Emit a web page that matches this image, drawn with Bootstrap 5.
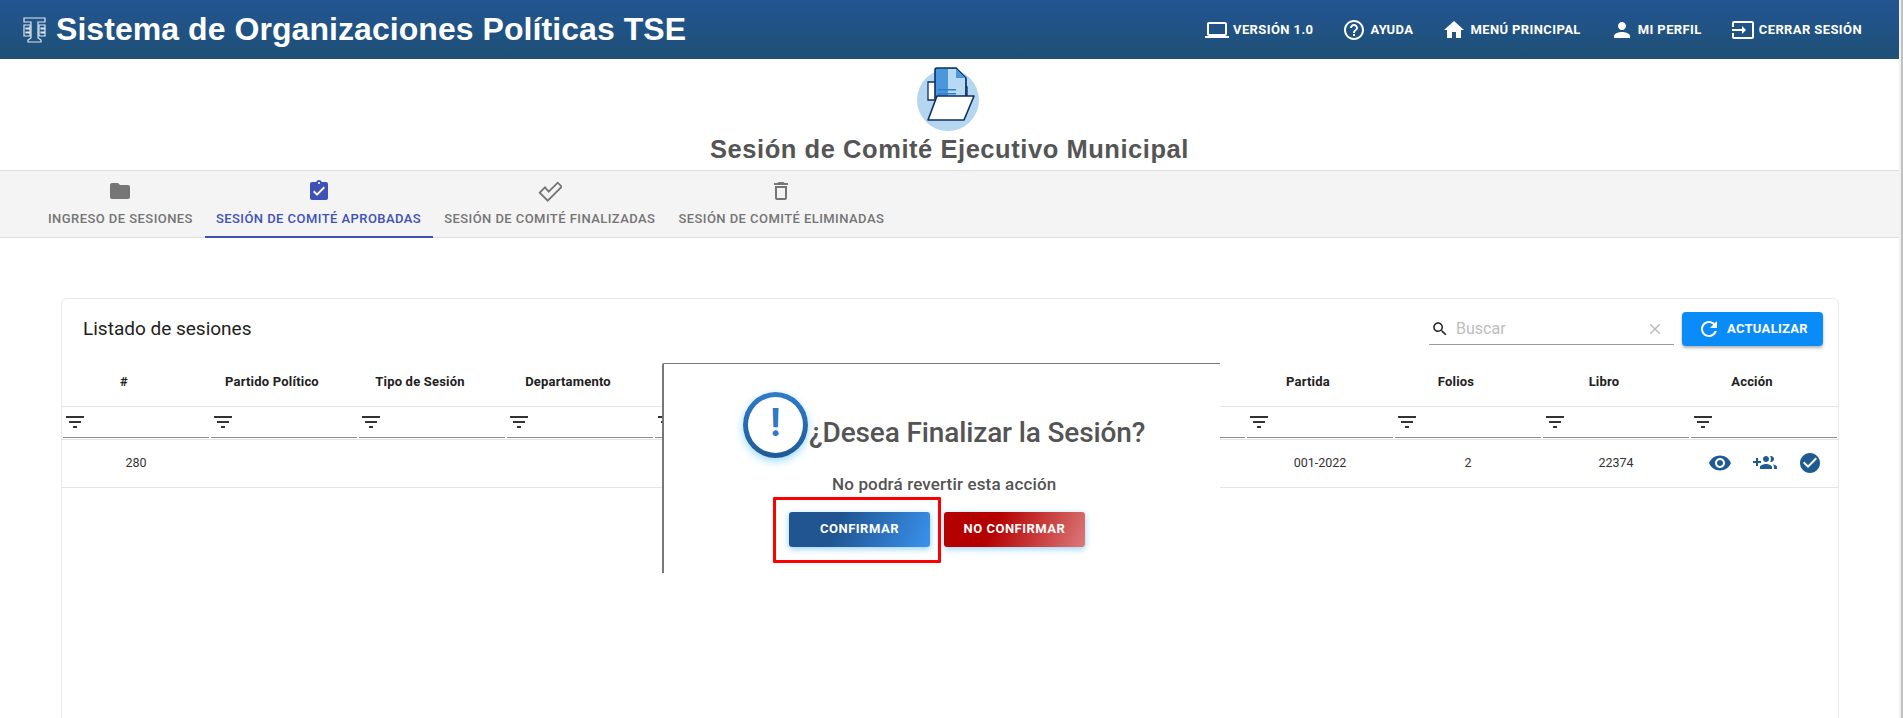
<!DOCTYPE html>
<html lang="es">

<head>
    <meta charset="UTF-8">
    <meta name="viewport" content="width=device-width, initial-scale=1.0">
    <title>Sistema de Organizaciones Políticas TSE</title>
    <link href="https://cdn.jsdelivr.net/npm/bootstrap@5.3.0/dist/css/bootstrap.min.css" rel="stylesheet">
    <style>
        html, body { height: 100%; overflow: hidden; }
        body { background: #fff; font-family: Roboto, "Liberation Sans", sans-serif; color: #212121; }
        svg { fill: currentColor; flex: none; display: block; }

        /* thin page scrollbar */
        .page-scroll { width: 4px; background: #c0c0c0; border-left: 2px solid #f1f1f1; }

        /* top bar */
        .top-bar { height: 59px; padding: 0 37px 0 23px; background: linear-gradient(180deg, #225592 0%, #1f5076 100%); color: #fff; }
        .top-title { font: 700 32px "Liberation Sans", Arial, sans-serif; letter-spacing: .06px; margin: 0 0 0 10px; line-height: 59px; }
        .top-link { font-size: 13px; font-weight: 700; letter-spacing: .4px; text-transform: uppercase; color: #fff; text-decoration: none; }
        .top-links { gap: 29px; }

        /* heading */
        .page-head { height: 111px; padding-top: 7px; }
        .page-head svg { margin-right: 3px; }
        .page-head h1 { font: 700 25.5px/28px "Liberation Sans", Arial, sans-serif; color: #555; letter-spacing: .55px; margin: 1px 0 0; }

        /* tabs */
        .tab-bar { height: 68px; background: #f4f4f4; border-top: 1px solid #ddd; border-bottom: 1px solid #ddd; padding-left: 37px; }
        .tab-item { padding: 8px 12px 0 11px; color: #757575; font-size: 13px; font-weight: 500; letter-spacing: .44px; text-decoration: none; text-transform: uppercase; height: 67px; border-bottom: 2px solid transparent; }
        .tab-item span { margin-top: 6px; line-height: 20px; white-space: nowrap; }
        .tab-item.is-active { color: #3f51b5; border-bottom-color: #3f51b5; }

        /* list card */
        .list-wrap { flex: 1; min-height: 0; overflow: hidden; padding: 60px 60px 0 61px; }
        .list-card { height: 500px; border: 1px solid #e8e8f0; border-radius: 6px; }
        .list-head { height: 60px; padding: 0 15px 0 21px; }
        .list-title { font-size: 19px; line-height: 23px; font-weight: 400; margin: 18px 0 0; color: #212121; }
        .search-box { width: 245px; height: 32px; margin: 14px 8px 0 0; border-bottom: 1px solid #999; padding: 0 10px 0 2px; color: #bdbdbd; font-size: 16px; }
        .search-box span { flex: 1; margin-left: 7px; }
        .btn-update { width: 141px; height: 34px; padding: 0; margin-top: 13px; background: #0a8cf8; border: 0; border-radius: 4px; color: #fff; font-size: 13px; font-weight: 700; letter-spacing: .3px; box-shadow: 0 2px 3px rgba(0, 0, 0, .3); gap: 6px; }

        .data-table { table-layout: fixed; width: 1776px; margin: 0; --bs-table-border-color: #e4e4e4; }
        .data-table th, .data-table td { padding: 0; vertical-align: middle; text-align: center; font-size: 12.5px; }
        .data-table thead tr:first-child th { height: 47px; padding: 0 24px 2px 0; font-size: 13px; letter-spacing: .2px; font-weight: 700; color: #212121; }
        .filter-row th { height: 33px; font-weight: 400; padding: 0 1px !important; }
        .filter-cell { height: 30px; padding: 2px 0 0; border-bottom: 1px solid #8d8d8d; color: #333; }
        .data-table tbody td { height: 48px; color: #333; }
        .act-icons { gap: 21px; color: #1f5a93; margin-left: 2px; }

        /* dialog */
        .confirm-box { position: absolute; left: 662px; top: 363px; width: 558px; height: 210px; background: #fff; border-top: 1px solid #777; border-left: 2px solid #777; border-top-left-radius: 2px; }
        .alert-ring { position: absolute; left: 79px; top: 28px; width: 65px; height: 66px; border-radius: 50%; border: 5px solid transparent; background: linear-gradient(#fff, #fff) padding-box, linear-gradient(180deg, #2f7cc8, #1f5a96) border-box; box-shadow: 0 3px 8px rgba(70, 190, 240, .55); color: #2f78c4; font-size: 38px; line-height: 52px; text-align: center; font-weight: 700; }
        .confirm-title { position: absolute; left: 145px; top: 50px; margin: 0; font-size: 28px; letter-spacing: -.13px; line-height: 38px; font-weight: 500; color: #545454; white-space: nowrap; }
        .confirm-text { position: absolute; left: 168px; top: 109px; margin: 0; font-size: 17px; letter-spacing: .15px; line-height: 22px; font-weight: 500; color: #545454; white-space: nowrap; }
        .confirm-btn { position: absolute; top: 148px; width: 141px; height: 35px; padding: 0 0 1px; border: 0; border-radius: 3px; color: #fff; font-size: 13px; font-weight: 700; letter-spacing: .5px; box-shadow: 0 2px 6px rgba(60, 170, 230, .55); }
        .btn-yes { left: 125px; background: linear-gradient(115deg, #205592 35%, #3a92ee 100%); }
        .btn-no { left: 280px; background: linear-gradient(115deg, #b50000 35%, #dc7a7a 100%); }
        .red-mark { position: absolute; left: 773px; top: 497px; width: 168px; height: 66px; border: 3px solid #f00; border-radius: 1px; }
    </style>
</head>

<body class="d-flex">
    <div class="d-flex flex-column flex-grow-1 overflow-hidden">
        <nav class="top-bar d-flex align-items-center justify-content-between flex-shrink-0">
            <div class="d-flex align-items-center">
                <svg width="23" height="26" viewBox="0 0 23 26" style="fill:none;stroke:#dfe8f2;stroke-width:1.2">
                    <path d="M1 1h21v4H15v16l3 2v2H5v-2l3-2V5H1z" />
                    <path d="M1 8h6v3H3v1h4v3H3v1h4v3H1zM22 8h-6v11h6v-3h-4v-1h4v-3h-4v-1h4z" />
                </svg>
                <h2 class="top-title">Sistema de Organizaciones Políticas TSE</h2>
            </div>
            <div class="top-links d-flex align-items-center">
                <a class="top-link d-flex align-items-center gap-1" href="#"><svg width="24" height="24" viewBox="0 0 24 24"><path d="M20 18c1.1 0 1.99-.9 1.99-2L22 6c0-1.1-.9-2-2-2H4c-1.1 0-2 .9-2 2v10c0 1.1.9 2 2 2H0v2h24v-2h-4zM4 6h16v10H4V6z" /></svg>Versión 1.0</a>
                <a class="top-link d-flex align-items-center gap-1" href="#"><svg width="24" height="24" viewBox="0 0 24 24"><path d="M11 18h2v-2h-2v2zm1-16C6.48 2 2 6.48 2 12s4.48 10 10 10 10-4.48 10-10S17.52 2 12 2zm0 18c-4.41 0-8-3.59-8-8s3.59-8 8-8 8 3.59 8 8-3.59 8-8 8zm0-14c-2.21 0-4 1.79-4 4h2c0-1.1.9-2 2-2s2 .9 2 2c0 2-3 1.75-3 5h2c0-2.25 3-2.5 3-5 0-2.21-1.79-4-4-4z" /></svg>Ayuda</a>
                <a class="top-link d-flex align-items-center gap-1" href="#"><svg width="24" height="24" viewBox="0 0 24 24"><path d="M10 20v-6h4v6h5v-8h3L12 3 2 12h3v8z" /></svg>Menú Principal</a>
                <a class="top-link d-flex align-items-center gap-1" href="#"><svg width="24" height="24" viewBox="0 0 24 24"><path d="M12 12c2.21 0 4-1.79 4-4s-1.79-4-4-4-4 1.79-4 4 1.79 4 4 4zm0 2c-2.67 0-8 1.34-8 4v2h16v-2c0-2.66-5.33-4-8-4z" /></svg>Mi Perfil</a>
                <a class="top-link d-flex align-items-center gap-1" href="#"><svg width="24" height="24" viewBox="0 0 24 24"><path d="M21 3.01H3c-1.1 0-2 .9-2 2V9h2V4.99h18v14.03H3V15H1v4.01c0 1.1.9 1.98 2 1.98h18c1.1 0 2-.88 2-1.98v-14c0-1.11-.9-2-2-2zM11 16l4-4-4-4v3H1v2h10v3z" /></svg>Cerrar Sesión</a>
            </div>
        </nav>

        <header class="page-head d-flex flex-column align-items-center flex-shrink-0">
            <svg width="66" height="68" viewBox="0 0 66 68">
                <circle cx="33" cy="34" r="31" fill="#b5d6f0" />
                <path d="M13 16h8v18h-8z" fill="#fff" stroke="#0d2f5f" stroke-width="1.3" />
                <path d="M44 30h8v-9h-8z" fill="#fff" stroke="#0d2f5f" stroke-width="1.3" />
                <path d="M22 2h19l10 10v22H20V4q0-2 2-2z" fill="#4a97dc" stroke="#0d2f5f" stroke-width="1.6" />
                <path d="M33 3h8l9 9v21H33z" fill="#b7d9f2" />
                <path d="M41 3l9 9h-9z" fill="#4a97dc" />
                <path d="M23 23h18v1.6H23zM23 27h18v1.6H23zM26 31h13v1.6H26z" fill="#2f7fcb" />
                <path d="M22 30h37l-10 24H13z" fill="#fff" stroke="#0d2f5f" stroke-width="1.6" stroke-linejoin="round" />
            </svg>
            <h1>Sesión de Comité Ejecutivo Municipal</h1>
        </header>

        <div class="tab-bar d-flex flex-shrink-0">
            <a class="tab-item d-flex flex-column align-items-center" href="#"><svg width="24" height="24" viewBox="0 0 24 24"><path d="M10 4H4c-1.1 0-1.99.9-1.99 2L2 18c0 1.1.9 2 2 2h16c1.1 0 2-.9 2-2V8c0-1.1-.9-2-2-2h-8l-2-2z" /></svg><span>Ingreso de Sesiones</span></a>
            <a class="tab-item is-active d-flex flex-column align-items-center" href="#"><svg width="24" height="24" viewBox="0 0 24 24"><path d="M19 3h-4.18C14.4 1.84 13.3 1 12 1c-1.3 0-2.4.84-2.82 2H5c-1.1 0-2 .9-2 2v14c0 1.1.9 2 2 2h14c1.1 0 2-.9 2-2V5c0-1.1-.9-2-2-2zm-7 0c.55 0 1 .45 1 1s-.45 1-1 1-1-.45-1-1 .45-1 1-1zm-2 14l-4-4 1.41-1.41L10 14.17l6.59-6.59L18 9l-8 8z" /></svg><span>Sesión de Comité Aprobadas</span></a>
            <a class="tab-item d-flex flex-column align-items-center" href="#"><svg width="24" height="24" viewBox="0 0 24 24" style="fill:none;stroke:currentColor;stroke-width:1.8"><path d="M1.700 13.700L7 8.300l3.700 4.400 9-9 4 4-14 14z" /></svg><span>Sesión de Comité Finalizadas</span></a>
            <a class="tab-item d-flex flex-column align-items-center" href="#"><svg width="24" height="24" viewBox="0 0 24 24"><path d="M6 19c0 1.1.9 2 2 2h8c1.1 0 2-.9 2-2V7H6v12zM8 9h8v10H8V9zm7.500-5l-1-1h-5l-1 1H5v2h14V4h-3.500z" /></svg><span>Sesión de Comité Eliminadas</span></a>
        </div>

        <main class="list-wrap">
            <section class="card list-card">
                <div class="list-head d-flex align-items-start justify-content-between">
                    <h3 class="list-title">Listado de sesiones</h3>
                    <div class="d-flex align-items-start">
                        <div class="search-box d-flex align-items-center">
                            <svg class="text-dark" width="18" height="18" viewBox="0 0 24 24"><path d="M15.500 14h-.79l-.28-.27C15.410 12.590 16 11.110 16 9.500 16 5.910 13.090 3 9.500 3S3 5.910 3 9.500 5.910 16 9.500 16c1.610 0 3.090-.59 4.230-1.570l.27.28v.79l5 4.990L20.490 19l-4.990-5zm-6 0C7.010 14 5 11.990 5 9.500S7.010 5 9.500 5 14 7.010 14 9.500 11.990 14 9.500 14z" /></svg>
                            <span>Buscar</span>
                            <svg width="18" height="18" viewBox="0 0 24 24"><path d="M19 6.410L17.590 5 12 10.590 6.410 5 5 6.410 10.590 12 5 17.590 6.410 19 12 13.410 17.590 19 19 17.590 13.410 12z" /></svg>
                        </div>
                        <button class="btn btn-update d-flex align-items-center justify-content-center" type="button"><svg width="24" height="24" viewBox="0 0 24 24"><path d="M17.650 6.350C16.200 4.900 14.210 4 12 4c-4.420 0-7.990 3.580-7.990 8s3.570 8 7.990 8c3.730 0 6.840-2.550 7.730-6h-2.080c-.82 2.330-3.040 4-5.650 4-3.310 0-6-2.690-6-6s2.690-6 6-6c1.660 0 3.140.69 4.220 1.780L13 11h7V4l-2.350 2.350z" /></svg>ACTUALIZAR</button>
                    </div>
                </div>
                <table class="table data-table">
                    <thead>
                        <tr id="head-row"></tr>
                        <tr id="filter-row" class="filter-row"></tr>
                    </thead>
                    <tbody>
                        <tr id="data-row"></tr>
                    </tbody>
                </table>
            </section>
        </main>
    </div>
    <div class="page-scroll flex-shrink-0"></div>

    <div class="confirm-box">
        <div class="alert-ring">!</div>
        <h2 class="confirm-title">¿Desea Finalizar la Sesión?</h2>
        <p class="confirm-text">No podrá revertir esta acción</p>
        <button class="btn confirm-btn btn-yes" type="button">CONFIRMAR</button>
        <button class="btn confirm-btn btn-no" type="button">NO CONFIRMAR</button>
    </div>
    <div class="red-mark"></div>

    <script>
        const columns = ['#', 'Partido Político', 'Tipo de Sesión', 'Departamento', '', '', '', '', 'Partida', 'Folios', 'Libro', 'Acción'];
        const row = { 0: '280', 8: '001-2022', 9: '2', 10: '22374' };
        const filterIcon = '<svg width="24" height="24" viewBox="0 0 24 24"><path d="M10 18h4v-2h-4v2zM3 6v2h18V6H3zm3 7h12v-2H6v2z"/></svg>';
        const actions = '<div class="act-icons d-flex justify-content-center">' +
            '<svg width="24" height="24" viewBox="0 0 24 24"><path d="M12 4.500C7 4.500 2.730 7.610 1 12c1.730 4.390 6 7.500 11 7.500s9.270-3.110 11-7.500c-1.730-4.390-6-7.500-11-7.500zM12 17c-2.760 0-5-2.240-5-5s2.240-5 5-5 5 2.240 5 5-2.240 5-5 5zm0-8c-1.660 0-3 1.340-3 3s1.340 3 3 3 3-1.340 3-3-1.340-3-3-3z"/></svg>' +
            '<svg width="24" height="24" viewBox="0 0 24 24"><path d="M8 10H5V7H3v3H0v2h3v3h2v-3h3v-2zm10 1c1.660 0 2.990-1.340 2.990-3S19.660 5 18 5c-.32 0-.63.05-.91.14.57.81.9 1.790.9 2.860s-.34 2.040-.9 2.860c.28.09.59.14.91.14zm-5 0c1.660 0 2.990-1.340 2.990-3S14.660 5 13 5s-3 1.340-3 3 1.340 3 3 3zm6.620 2.160c.83.73 1.380 1.660 1.380 2.840v2h3v-2c0-1.540-2.370-2.490-4.380-2.840zM13 13c-2 0-6 1-6 3v2h12v-2c0-2-4-3-6-3z"/></svg>' +
            '<svg width="24" height="24" viewBox="0 0 24 24"><path d="M12 2C6.480 2 2 6.480 2 12s4.480 10 10 10 10-4.480 10-10S17.520 2 12 2zm-2 15l-5-5 1.410-1.410L10 14.170l7.590-7.590L19 8l-9 9z"/></svg>' +
            '</div>';

        document.getElementById('head-row').innerHTML = columns.map(c => `<th>${c}</th>`).join('');
        document.getElementById('filter-row').innerHTML = columns.map(() => `<th><div class="filter-cell">${filterIcon}</div></th>`).join('');
        document.getElementById('data-row').innerHTML = columns.map((c, i) => `<td>${i === 11 ? actions : (row[i] || '')}</td>`).join('');
    </script>
    <script src="https://cdn.jsdelivr.net/npm/bootstrap@5.3.0/dist/js/bootstrap.bundle.min.js"></script>
</body>

</html>
